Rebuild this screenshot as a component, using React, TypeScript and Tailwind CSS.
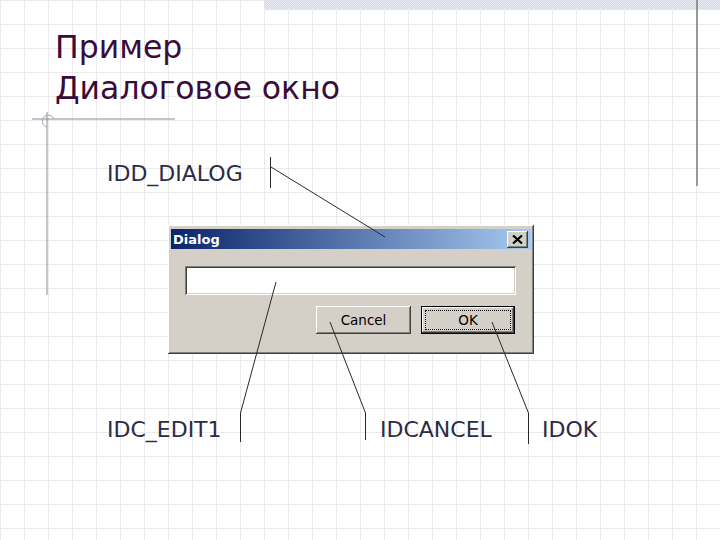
import React from 'react'

const raised =
    'shadow-[inset_-1px_-1px_#404040,inset_1px_1px_#ffffff,inset_-2px_-2px_#808080,inset_2px_2px_#d4d0c8]'
const sunken =
    'shadow-[inset_1px_1px_#808080,inset_-1px_-1px_#ffffff,inset_2px_2px_#404040,inset_-2px_-2px_#d4d0c8]'

function CalloutLines() {
    return (
        <svg
            className="pointer-events-none absolute inset-0"
            width="720"
            height="540"
            viewBox="0 0 720 540"
        >
            {/* slide decoration */}
            <line x1="697" y1="0" x2="697" y2="186" stroke="#7a7a7a" strokeWidth="1.5" />
            <line x1="32" y1="119" x2="175" y2="119" stroke="#8a8a96" strokeWidth="1" />
            <line x1="47" y1="112" x2="47" y2="295" stroke="#8a8a96" strokeWidth="1" />
            <path d="M 54 119 A 6 6 0 1 0 47 127" fill="none" stroke="#a0a0aa" strokeWidth="1" />

            {/* callouts */}
            <g stroke="#2a2a2a" strokeWidth="1" fill="none">
                <line x1="270.5" y1="157" x2="270.5" y2="188" />
                <line x1="271" y1="167" x2="385" y2="237" />

                <line x1="240.5" y1="413" x2="240.5" y2="442" />
                <line x1="240.5" y1="413" x2="276" y2="282" />

                <line x1="365.5" y1="413" x2="365.5" y2="440" />
                <line x1="365.5" y1="413" x2="330" y2="322" />

                <line x1="528.5" y1="413" x2="528.5" y2="444" />
                <line x1="528.5" y1="413" x2="492" y2="322" />
            </g>
        </svg>
    )
}

function Dialog() {
    return (
        <div
            className={`ml-[168px] w-[366px] h-[129px] bg-[#d4d0c8] p-[3px] ${raised} font-['DejaVu_Sans',sans-serif]`}
        >
            <div className="mt-px h-[20px] flex items-center justify-between pl-[2px] pr-[3px] bg-[linear-gradient(to_right,#0a246a,#a6caf0)]">
                <span className="text-white font-bold text-[13px] leading-none">Dialog</span>
                <div
                    className={`w-[21px] h-[17px] bg-[#d4d0c8] ${raised} flex items-center justify-center`}
                >
                    <svg width="11" height="9" viewBox="0 0 11 9">
                        <path d="M1 0.5 L10 8.5 M10 0.5 L1 8.5" stroke="#000" strokeWidth="2.2" />
                    </svg>
                </div>
            </div>

            <div className="pl-[14px] pr-[15px] pt-[17px]">
                <div className={`h-[29px] bg-white ${sunken}`} />

                <div className="mt-[11px] flex justify-end gap-[10px] pr-px">
                    <div
                        className={`w-[95px] h-[28px] pt-px flex items-center justify-center text-[13.5px] text-black ${raised}`}
                    >
                        Cancel
                    </div>
                    <div className="w-[94px] h-[28px] border border-black">
                        <div className={`w-full h-full p-[3px] ${raised}`}>
                            <div className="w-full h-full pt-px border border-dotted border-black flex items-center justify-center text-[13.5px] text-black">
                                OK
                            </div>
                        </div>
                    </div>
                </div>
            </div>
        </div>
    )
}

export default function App() {
    return (
        <div className="relative w-[720px] h-[540px] overflow-hidden bg-white bg-[linear-gradient(to_right,#ebebeb_1px,transparent_1px),linear-gradient(to_bottom,#ebebeb_1px,transparent_1px)] bg-[size:24px_24px] font-['DejaVu_Sans',sans-serif]">
            <div className="ml-[264px] h-[10px] border-b border-[#e2e7f6] bg-[repeating-conic-gradient(#cdd4e6_0_25%,#eef0f7_0_50%)] bg-[size:2px_2px]" />

            <h1 className="pt-[17px] pl-[55px] text-[31.5px] leading-[41px] text-[#3a0c3a] font-normal">
                Пример
                <br />
                Диалоговое окно
            </h1>

            <div className="mt-[51px] pl-[107px] text-[22px] leading-[28px] text-[#2b2b45]">
                IDD_DIALOG
            </div>

            <div className="mt-[37px]">
                <Dialog />
            </div>

            <div className="mt-[62px] flex text-[22px] leading-[28px] text-[#2b2b45]">
                <span className="ml-[107px] w-[273px]">IDC_EDIT1</span>
                <span className="w-[162px]">IDCANCEL</span>
                <span>IDOK</span>
            </div>

            <CalloutLines />
        </div>
    )
}
